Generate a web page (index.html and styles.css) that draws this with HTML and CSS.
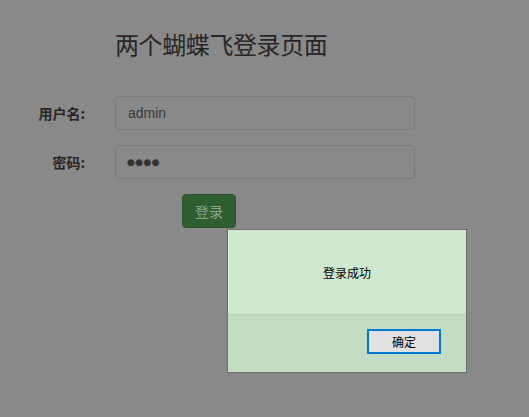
FILE: index.html
```html
<!DOCTYPE html>
<html lang="zh-CN">
<head>
<meta charset="utf-8">
<title>两个蝴蝶飞登录页面</title>
<link rel="stylesheet" href="styles.css">
</head>
<body>
<div class="page">
  <h1 class="title">两个蝴蝶飞登录页面</h1>
  <form class="form">
    <label class="label">用户名:</label>
    <div class="input">admin</div>
    <label class="label">密码:</label>
    <div class="input dots">●●●●</div>
    <div class="btn-row"><span class="btn">登录</span></div>
  </form>
</div>
<div class="dialog">
  <div class="dialog-body">登录成功</div>
  <div class="dialog-foot"><span class="ok">确定</span></div>
</div>
</body>
</html>
```
FILE: styles.css
```css
html, body {
  margin: 0;
  padding: 0;
  background: #898989;
  font-family: "Liberation Sans", "Noto Sans CJK SC", sans-serif;
}
.page {
  padding-top: 31px;
}
.title {
  margin: 0 0 39px 115px;
  font-family: "Noto Sans CJK SC", "Liberation Sans", sans-serif;
  font-weight: 400;
  font-size: 24px;
  line-height: 26px;
  color: #262626;
  letter-spacing: -0.4px;
}
.form {
  display: grid;
  grid-template-columns: 85px 300px;
  column-gap: 30px;
  row-gap: 15px;
  align-items: center;
  margin: 0;
}
.label {
  text-align: right;
  font-family: "Noto Sans CJK SC", sans-serif;
  font-weight: 700;
  font-size: 14px;
  color: #262626;
}
.input {
  box-sizing: border-box;
  height: 34px;
  border: 1px solid #7a7a7a;
  border-radius: 4px;
  padding: 0 12px;
  font-size: 14px;
  line-height: 32px;
  color: #3a3a3a;
}
.dots {
  font-family: "DejaVu Sans", sans-serif;
  font-size: 9px;
  letter-spacing: 0.4px;
  padding-left: 11px;
  color: #333;
}
.btn-row {
  grid-column: 2;
  padding-left: 67px;
}
.btn {
  display: inline-block;
  box-sizing: border-box;
  height: 34px;
  width: 54px;
  text-align: center;
  background: #2f5e30;
  border: 1px solid #2a522a;
  border-radius: 4px;
  font-family: "Noto Sans CJK SC", sans-serif;
  font-size: 14px;
  line-height: 32px;
  color: #8aa68b;
}
.dialog {
  position: absolute;
  left: 227px;
  top: 229px;
  width: 238px;
  border: 1px solid #6e6e6e;
  font-family: "Noto Sans CJK SC", sans-serif;
  font-size: 12px;
  color: #000;
}
.dialog-body {
  height: 84px;
  background: #cfe9d1;
  border-bottom: 1px solid #bad3bb;
  display: flex;
  align-items: center;
  justify-content: center;
}
.dialog-foot {
  height: 57px;
  box-sizing: border-box;
  background: #c3dcc4;
  display: flex;
  align-items: flex-start;
  justify-content: flex-end;
  padding: 14px 25px 0 0;
}
.ok {
  box-sizing: border-box;
  width: 74px;
  height: 25px;
  border: 2px solid #0078d7;
  background: #e1e1e1;
  text-align: center;
  line-height: 21px;
}
```
